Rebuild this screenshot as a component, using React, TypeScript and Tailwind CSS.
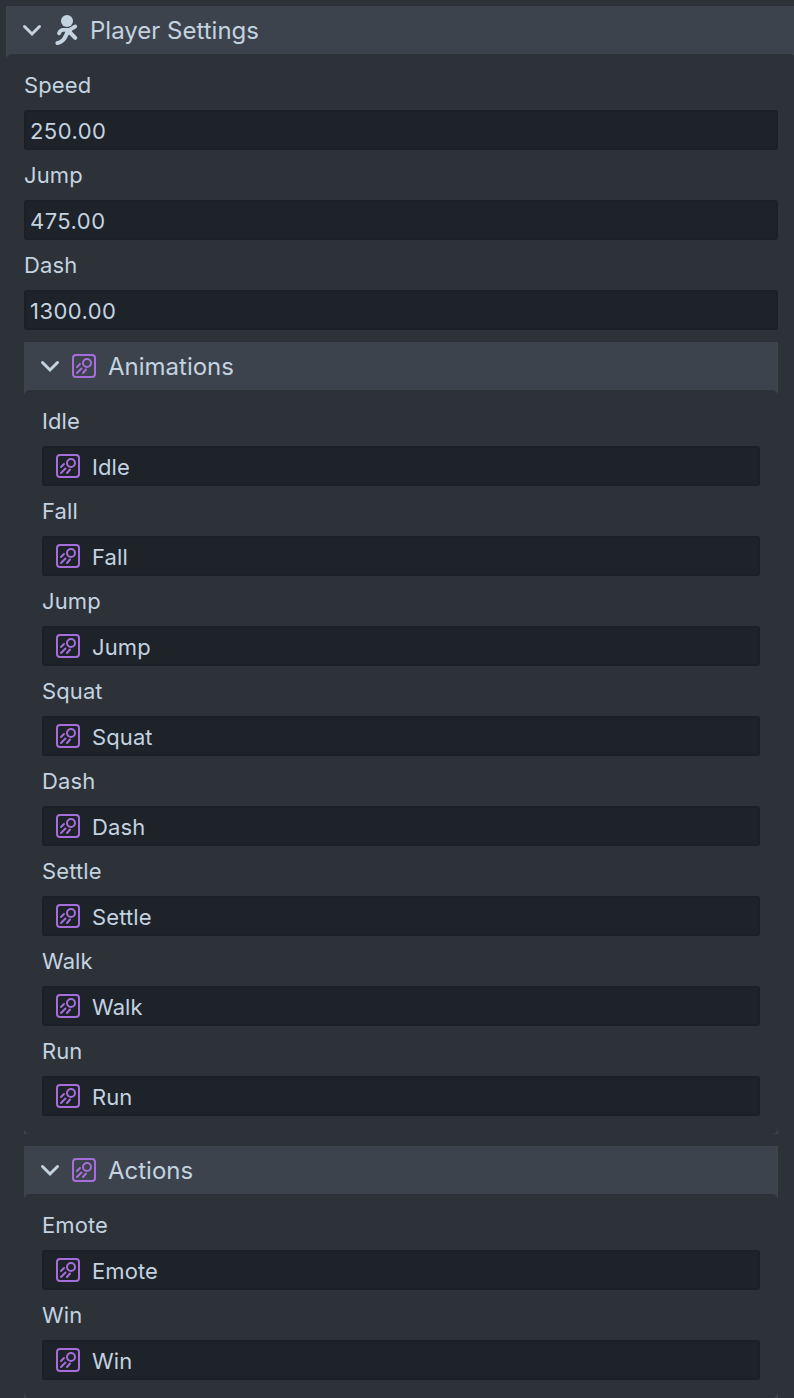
import type { ReactNode } from "react";

const playerFields = [
    { label: "Speed", value: "250.00" },
    { label: "Jump", value: "475.00" },
    { label: "Dash", value: "1300.00" },
];

const animations = ["Idle", "Fall", "Jump", "Squat", "Dash", "Settle", "Walk", "Run"];
const actions = ["Emote", "Win"];

function Chevron() {
    return (
        <svg className="h-6 w-6 shrink-0" viewBox="0 0 24 24" fill="none" stroke="#c3d3e0" strokeWidth="3" strokeLinecap="round" strokeLinejoin="miter">
            <path d="M4.5 8.5 12 16l7.5-7.5" />
        </svg>
    );
}

function RunnerIcon() {
    return (
        <svg className="h-8 w-6 shrink-0" viewBox="0 0 24 32" fill="none" stroke="#c3d3e0" strokeLinecap="round" strokeLinejoin="round">
            <circle cx="13" cy="7" r="6" fill="#c3d3e0" stroke="none" />
            <path d="M5 19.3Q6.500 15.800 9 15.800H15.500L21.200 12.500" strokeWidth="3.800" />
            <path d="M16 18.500 21.200 23.800" strokeWidth="4" />
            <path d="M13.500 18 11.500 22.500Q9 28 3.500 29" strokeWidth="4.200" />
            <path d="M12.500 16.500 17 16 16 19 13 20.500Z" fill="#c3d3e0" strokeWidth="2" />
        </svg>
    );
}

function ClipIcon() {
    return (
        <svg className="h-6 w-6 shrink-0" viewBox="0 0 24 24" fill="none" stroke="#a56edb" strokeWidth="2" strokeLinecap="round">
            <rect x="1" y="1" width="22" height="22" rx="3" />
            <circle cx="15" cy="9" r="4" />
            <path d="M5 13l3-3M5 19l4.5-4.5M11 19l3-3.5" />
        </svg>
    );
}

function Section({ title, icon, children }: { title: string; icon: ReactNode; children: ReactNode }) {
    return (
        <section className="bg-[#3d434c]">
            <header className="flex h-12 items-center pl-3.5">
                <Chevron />
                {icon}
                <h2 className="pt-0.5 text-2xl leading-none">{title}</h2>
            </header>
            <div className="rounded-[6px] bg-[#2d3138] px-[18px] pt-1.5 pb-[18px]">{children}</div>
        </section>
    );
}

function Field({ label, children }: { label: string; children: ReactNode }) {
    return (
        <div className="text-[22px] tracking-[0.1px]">
            <div className="flex h-[50px] items-center">{label}</div>
            <div className="flex h-10 items-center rounded-[3px] border-2 border-[#1c1f23] bg-[#1e2229]">
                {children}
            </div>
        </div>
    );
}

function ClipSection({ title, clips }: { title: string; clips: string[] }) {
    return (
        <Section title={title} icon={<span className="mr-3 ml-2.5"><ClipIcon /></span>}>
            {clips.map((clip) => (
                <Field key={clip} label={clip}>
                    <span className="mr-3 ml-3"><ClipIcon /></span>
                    <span className="pt-0.5">{clip}</span>
                </Field>
            ))}
        </Section>
    );
}

export default function App() {
    return (
        <main className="h-[1398px] w-[794px] overflow-hidden bg-[#2d3138] pt-1.5 pl-1.5 font-['Inter',sans-serif] text-[#c3d3e0]">
            <div className="w-[790px]">
                <Section title="Player Settings" icon={<span className="mr-3 ml-2.5"><RunnerIcon /></span>}>
                    {playerFields.map((field) => (
                        <Field key={field.label} label={field.label}>
                            <span className="pt-0.5 pl-1 tracking-[0.45px]">{field.value}</span>
                        </Field>
                    ))}
                    <div className="mt-3 flex flex-col gap-3">
                        <ClipSection title="Animations" clips={animations} />
                        <ClipSection title="Actions" clips={actions} />
                    </div>
                </Section>
            </div>
        </main>
    );
}
